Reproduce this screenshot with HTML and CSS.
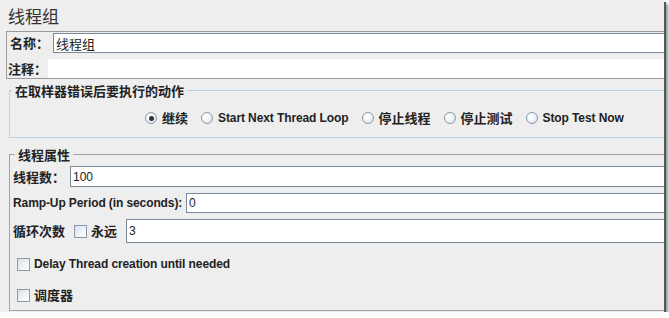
FILE: index.html
```html
<!DOCTYPE html>
<html lang="zh">

<head>
    <meta charset="UTF-8">
    <title>线程组</title>
    <link rel="stylesheet" href="styles.css">
</head>

<body>
    <div class="window">
        <div class="content">
            <h1 class="title">线程组</h1>
            <div class="name-panel">
                <div class="name-row">
                    <label class="zh">名称：</label>
                    <input class="field" type="text" value="线程组">
                </div>
                <div class="comment-row">
                    <label class="zh">注释：</label>
                    <input class="field plain" type="text">
                </div>
            </div>
            <fieldset class="group on-error">
                <legend class="zh">在取样器错误后要执行的动作</legend>
                <div class="radios">
                    <label class="radio"><span class="dot checked"></span><span class="zh">继续</span></label>
                    <label class="radio"><span class="dot"></span>Start Next Thread Loop</label>
                    <label class="radio"><span class="dot"></span><span class="zh">停止线程</span></label>
                    <label class="radio"><span class="dot"></span><span class="zh">停止测试</span></label>
                    <label class="radio"><span class="dot"></span>Stop Test Now</label>
                </div>
            </fieldset>
            <fieldset class="group props">
                <legend class="zh">线程属性</legend>
                <div class="prop-row threads">
                    <label class="zh">线程数：</label>
                    <input class="field" type="text" value="100">
                </div>
                <div class="prop-row ramp">
                    <label>Ramp-Up Period (in seconds):</label>
                    <input class="field" type="text" value="0">
                </div>
                <div class="prop-row loops">
                    <label class="zh">循环次数</label>
                    <span class="box"></span>
                    <label class="zh forever">永远</label>
                    <input class="field" type="text" value="3">
                </div>
                <div class="check-row delay">
                    <span class="box"></span>
                    <label>Delay Thread creation until needed</label>
                </div>
                <div class="check-row scheduler">
                    <span class="box"></span>
                    <label class="zh">调度器</label>
                </div>
            </fieldset>
        </div>
    </div>
</body>

</html>
```

FILE: styles.css
```css
body {
    margin: 0;
    background-color: #fff;
    font-family: "Liberation Sans", "Noto Sans CJK SC", sans-serif;
    color: #222;
}

.window {
    width: 664px;
    height: 312px;
    background-color: #eeeeee;
    overflow: hidden;
    box-shadow: 2px 2px 0 #555, 4px 4px 3px rgba(0, 0, 0, 0.45);
}

.content {
    width: 700px;
}

.zh {
    font-family: "Noto Sans CJK SC", sans-serif;
    font-size: 13px;
    letter-spacing: 0;
}

.title {
    margin: 0 0 3px;
    padding: 4px 0 0 8px;
    font-family: "Noto Sans CJK SC", sans-serif;
    font-size: 17px;
    line-height: 24px;
    font-weight: normal;
    color: #333;
}

label {
    font-weight: bold;
    font-size: 12px;
    line-height: 16px;
    letter-spacing: -0.1px;
    white-space: nowrap;
}

.field {
    flex: 1;
    box-sizing: border-box;
    min-width: 0;
    margin: 0;
    padding: 0 2px;
    border: 1px solid #7b8a99;
    background-color: #fff;
    font-family: "Liberation Sans", "Noto Sans CJK SC", sans-serif;
    font-size: 12px;
    color: #222;
    outline: none;
}

/* name / comment block */
.name-panel {
    margin-left: 6px;
    padding-top: 1px;
    border: 1px solid #9a9a9a;
}

.name-row,
.comment-row {
    display: flex;
    align-items: center;
}

.name-row label {
    width: 46px;
    padding-left: 3px;
    box-sizing: border-box;
}

.name-row .field {
    height: 20px;
    font-size: 13px;
}

.comment-row {
    margin-top: 6px;
}

.comment-row label {
    width: 41px;
    padding-left: 1px;
    box-sizing: border-box;
}

.comment-row .field.plain {
    height: 19px;
    border: none;
}

/* group boxes */
.group {
    min-width: 0;
    margin: 4px 0 0 9px;
    padding: 0;
    border: 1px solid #b8cfe5;
}

.group legend {
    margin-left: 2px;
    padding: 0 3px;
    font-weight: bold;
    line-height: 15px;
}

.radios {
    display: flex;
    align-items: center;
    height: 16px;
    padding: 12px 0 11px 135px;
}

.radio {
    display: flex;
    align-items: center;
    gap: 5px;
    margin-right: 13px;
}

.dot {
    position: relative;
    width: 10px;
    height: 10px;
    border: 1px solid #8b9aa9;
    border-radius: 50%;
    background: radial-gradient(circle at 35% 35%, #fff 0%, #f4f7fa 40%, #cfd9e4 100%);
}

.dot.checked::after {
    content: "";
    position: absolute;
    left: 2.5px;
    top: 2.5px;
    width: 5px;
    height: 5px;
    border-radius: 50%;
    background-color: #333;
}

.props {
    margin-top: 9px;
    border-color: #a3a3a3;
    padding: 0 0 7px 3px;
}

.prop-row {
    display: flex;
    align-items: center;
    margin-top: 6px;
}

.threads {
    margin-top: 4px;
}

.threads .field {
    height: 21px;
}

.threads label {
    width: 57px;
}

.ramp .field {
    height: 20px;
}

.ramp label {
    width: 173px;
}

.loops .field {
    height: 24px;
    margin-left: 9px;
}

.box {
    flex: none;
    width: 11px;
    height: 11px;
    border: 1px solid #8b9aa9;
    background: linear-gradient(135deg, #d5dfea 0%, #f2f5f9 60%, #fff 100%);
}

.loops .box {
    margin: 0 4px 0 9px;
}

.check-row {
    display: flex;
    align-items: center;
    gap: 4px;
    height: 16px;
    padding-left: 4px;
}

.delay {
    margin-top: 13px;
}

.scheduler {
    margin-top: 15px;
}
```
